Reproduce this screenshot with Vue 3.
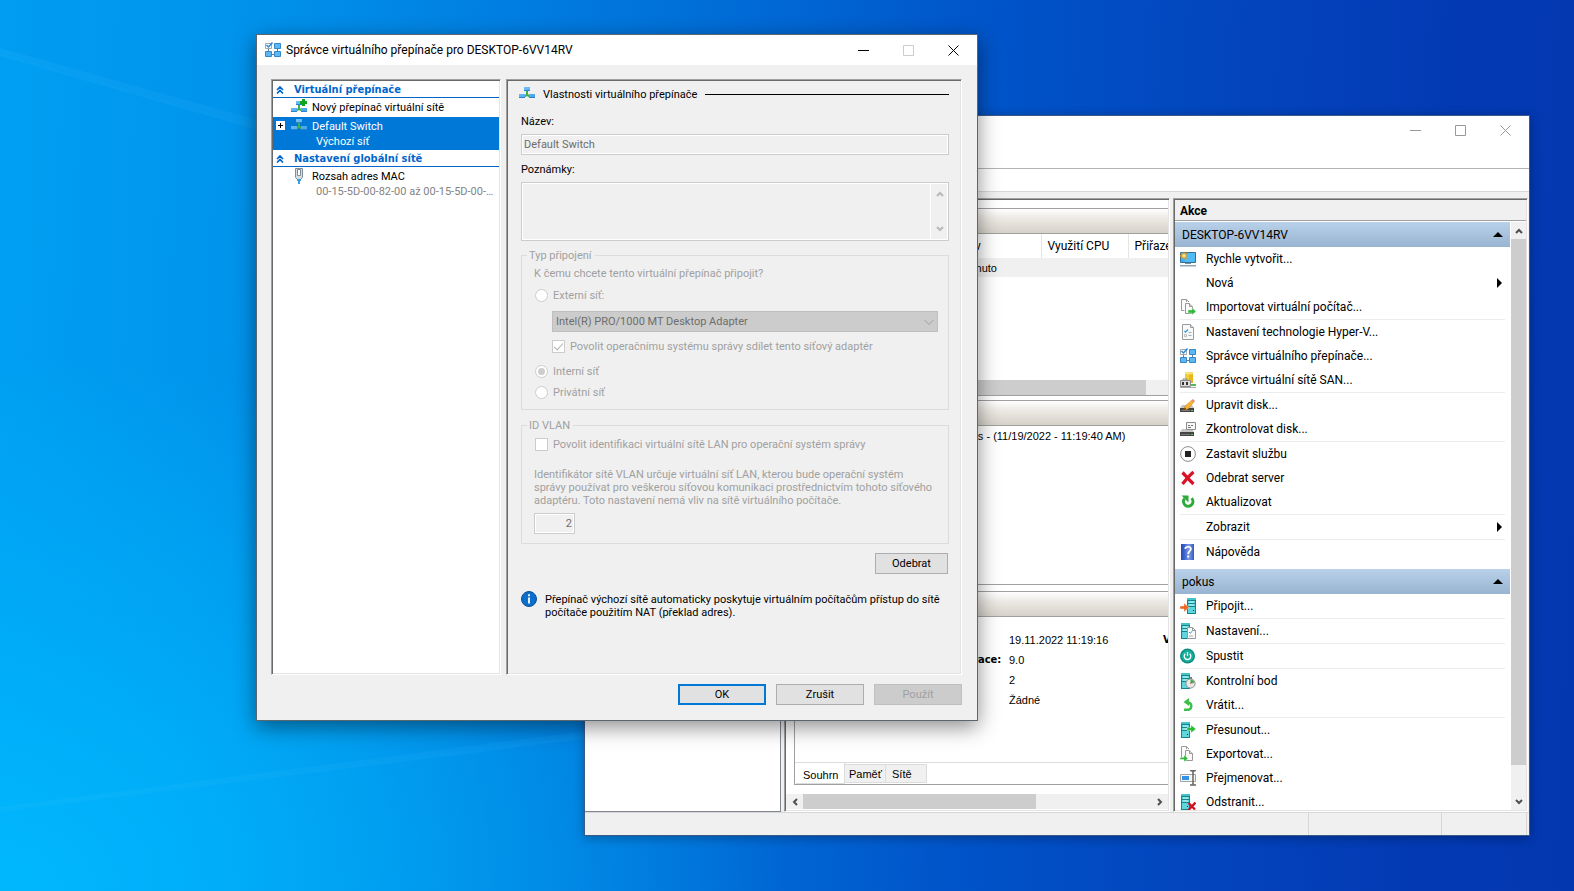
<script setup>
const serverActions = [
  { label: 'Rychle vytvořit...', icon: 'quick' },
  { label: 'Nová', submenu: true },
  { label: 'Importovat virtuální počítač...', icon: 'import' },
  { label: 'Nastavení technologie Hyper-V...', icon: 'settings', sep: true },
  { label: 'Správce virtuálního přepínače...', icon: 'manager' },
  { label: 'Správce virtuální sítě SAN...', icon: 'san' },
  { label: 'Upravit disk...', icon: 'disk-edit', sep: true },
  { label: 'Zkontrolovat disk...', icon: 'disk-check' },
  { label: 'Zastavit službu', icon: 'stop', sep: true },
  { label: 'Odebrat server', icon: 'remove' },
  { label: 'Aktualizovat', icon: 'refresh' },
  { label: 'Zobrazit', submenu: true, sep: true },
  { label: 'Nápověda', icon: 'help', sep: true }
]
const vmActions = [
  { label: 'Připojit...', icon: 'connect' },
  { label: 'Nastavení...', icon: 'vm-settings', sep: true },
  { label: 'Spustit', icon: 'power', sep: true },
  { label: 'Kontrolní bod', icon: 'checkpoint', sep: true },
  { label: 'Vrátit...', icon: 'revert' },
  { label: 'Přesunout...', icon: 'move', sep: true },
  { label: 'Exportovat...', icon: 'export' },
  { label: 'Přejmenovat...', icon: 'rename' },
  { label: 'Odstranit...', icon: 'delete' }
]
const groups = [
  { title: 'DESKTOP-6VV14RV', items: serverActions },
  { title: 'pokus', items: vmActions }
]
</script>

<template>
  <main class="desktop">
    <svg class="sprite" width="0" height="0" aria-hidden="true">
      <defs>
        <linearGradient id="blueFill" x1="0" y1="0" x2="1" y2="1">
          <stop offset="0" stop-color="#7cc4f5" /><stop offset="1" stop-color="#3ea3ea" />
        </linearGradient>
        <linearGradient id="helpFill" x1="0" y1="0" x2="1" y2="0">
          <stop offset="0" stop-color="#2a4bb0" /><stop offset=".25" stop-color="#3b62cc" /><stop offset=".6" stop-color="#7e9ce8" /><stop offset="1" stop-color="#3558c0" />
        </linearGradient>
        <symbol id="i-switch" viewBox="0 0 16 16">
          <path d="M7 5h2v3l2 2v1H9.500L8 10l-1.500 1H5v-1l2-2z" fill="#3eb049" />
          <path d="M5 1h6v4H5zM0 8h6v4H0zM10 8h6v4h-6z" fill="url(#blueFill)" />
          <path d="M5 4h6v1H5zM0 11h6v1H0zM10 11h6v1h-6z" fill="#2b83cd" />
        </symbol>
        <symbol id="i-switch-new" viewBox="0 0 16 16">
          <use href="#i-switch" x="0" y="1" width="16" height="16" />
          <path d="M11 0h3v2h2v3h-2v2h-3V5H9V2h2z" fill="#0ea51c" />
        </symbol>
        <symbol id="i-manager" viewBox="0 0 16 16">
          <path d="M12.500 6v5M6 12.500h4M3.500 6v4" stroke="#6d7c88" fill="none" />
          <path d="M.5 1.500h6v5h-6z" fill="#fff" stroke="#a0a8ae" />
          <path d="M1.500 3l2 2L7.500.5" stroke="#2889dc" stroke-width="1.500" fill="none" />
          <path d="M9.500 1.500h6v5h-6zM.5 9.500h6v5h-6zM9.500 9.500h6v5h-6z" fill="#5cb8f4" stroke="#3488c8" />
        </symbol>
        <symbol id="i-nic" viewBox="0 0 16 16">
          <path d="M4.500.5h7v9l-2 2h-3l-2-2z" fill="#d5dce2" stroke="#7f8d99" />
          <path d="M6.500 1.500h3v6h-3z" fill="#fff" stroke="#7f8d99" />
          <path d="M6 11h4v2H6zM7 13h2v3H7z" fill="#38a0dc" />
        </symbol>
        <symbol id="i-quick" viewBox="0 0 16 16">
          <path d="M.5 1.500h15v10H.5z" fill="#37aef5" stroke="#35708f" />
          <path d="M8 2h7v9H4z" fill="#6cc7fb" opacity=".5" />
          <path d="M4 .8v8M0 4.800h8M1.200 2l5.600 5.600M6.800 2L1.200 7.600" stroke="#f0a41a" stroke-width="1.200" />
          <circle cx="4" cy="4.800" r="1.700" fill="#ffe08a" />
          <path d="M5 12h6v1H5z" fill="#79909c" /><path d="M0 14h16v1.500H0z" fill="#90a4b1" />
        </symbol>
        <symbol id="i-pages" viewBox="0 0 16 16">
          <path d="M1.500 11.500v-11h5l2.500 2.500M6.500.5V3" fill="#fafafa" stroke="#989898" />
          <path d="M1.500 11.500h3" stroke="#989898" />
          <path d="M5.500 4.500h4l3 3v7h-7z" fill="#fafafa" stroke="#989898" />
          <path d="M9.500 4.500v3h3" fill="#ddd" stroke="#989898" />
        </symbol>
        <symbol id="i-import" viewBox="0 0 16 16">
          <use href="#i-pages" width="16" height="16" />
          <path d="M8 11h4V8.500l4 4-4 3.500v-2H8z" fill="#2dba36" stroke="#fff" stroke-width=".4" />
        </symbol>
        <symbol id="i-export" viewBox="0 0 16 16">
          <use href="#i-pages" width="16" height="16" />
          <path d="M0 11.500h4V9l4 3.500L4 16v-2.500H0z" fill="#2dba36" stroke="#fff" stroke-width=".4" />
        </symbol>
        <symbol id="i-settings" viewBox="0 0 16 16">
          <path d="M2.500.5h8l3 3v12h-11z" fill="#f7f9fa" stroke="#969b9e" />
          <path d="M10.500.5v3h3" fill="#ddd" stroke="#969b9e" />
          <path d="M4.500 7l1 1.200L8 5.500" fill="none" stroke="#3094df" stroke-width="1.200" />
          <path d="M8.500 8.500h3M8.500 11.500h3" stroke="#aaa" /><path d="M4.500 10.500h2v2h-2z" fill="#fff" stroke="#bbb" />
        </symbol>
        <symbol id="i-san" viewBox="0 0 16 16">
          <path d="M5 1c0-1.200 8-1.200 8 0v10H5z" fill="#f2cc36" /><path d="M9 .2c2 0 4 .2 4 .8v10H9z" fill="#e5b91e" /><ellipse cx="9" cy="1.300" rx="4" ry="1.100" fill="#fbe684" />
          <path d="M3 8.500V7h4v1.500" fill="none" stroke="#888" /><path d="M.5 8.500h10v6H.5z" fill="#ddd" stroke="#8a8a8a" />
          <path d="M2 10h2v3H2zM6 10h2v3H6z" fill="#333" /><path d="M11 12h5v2h-5z" fill="#51b75b" /><path d="M0 15h16v1H0z" fill="#a4aaad" />
        </symbol>
        <symbol id="i-disk" viewBox="0 0 16 16">
          <path d="M2 8h10l2 3H0z" fill="#c6c6c6" /><path d="M0 11h14v4H0z" fill="#444" /><path d="M1 13h9v1H1z" fill="#777" /><path d="M11 13h2v1h-2z" fill="#47d24d" />
        </symbol>
        <symbol id="i-disk-edit" viewBox="0 0 16 16">
          <use href="#i-disk" width="16" height="16" />
          <path d="M4 13l1-4 7-6 2 2-6 7z" fill="#f6b335" stroke="#c98417" stroke-width=".5" /><path d="M11.500 3.300l1.500-1.300 2 2-1.300 1.500z" fill="#e58b7d" /><path d="M4 13l.7-2.600 1.600 1.600z" fill="#463012" />
        </symbol>
        <symbol id="i-disk-check" viewBox="0 0 16 16">
          <use href="#i-disk" width="16" height="16" />
          <path d="M6.500 1.500h9v7h-9z" fill="#f8f8f8" stroke="#8b8b8b" /><path d="M8 4h2v1H8zM11 4h2v1h-2zM8 6h3v1H8z" fill="#777" />
        </symbol>
        <symbol id="i-stop" viewBox="0 0 16 16">
          <circle cx="8" cy="8" r="7.400" fill="#fff" stroke="#8c8c8c" /><path d="M5 5h6v6H5z" fill="#222" />
        </symbol>
        <symbol id="i-remove" viewBox="0 0 16 16">
          <path d="M2.500 2.500c3 3 6 7 11 11.500M13.500 2C10 5 6 9.500 2.500 14" stroke="#db1226" stroke-width="3.200" fill="none" />
        </symbol>
        <symbol id="i-refresh" viewBox="0 0 16 16">
          <path d="M11.600 4.200a4.700 4.700 0 1 1-7 .3" fill="none" stroke="#2dab3a" stroke-width="3" />
          <path d="M1.500 1.500h7v7z" fill="#2dab3a" />
        </symbol>
        <symbol id="i-help" viewBox="0 0 16 16">
          <path d="M1 0h13v16H1z" fill="url(#helpFill)" />
          <path d="M5.300 5c0-3 5.600-3 5.600.1 0 2.300-2.700 2-2.700 4.900" fill="none" stroke="#fff" stroke-width="1.700" /><path d="M7.200 11.500h2v2h-2z" fill="#fff" />
        </symbol>
        <symbol id="i-server" viewBox="0 0 9 16">
          <path d="M0 0h9v16H0z" fill="#15848c" /><path d="M0 0h9v2H0z" fill="#43c3c8" /><path d="M1 3h7v12H1z" fill="#5fd5dc" />
          <path d="M1 5h7v1H1zM1 8h7v1H1z" fill="#15848c" /><path d="M2 3.500h5v1H2zM2 6.500h5v1H2z" fill="#c7f6f7" /><path d="M6 12h1v1H6z" fill="#126" />
        </symbol>
        <symbol id="i-connect" viewBox="0 0 16 16">
          <use href="#i-server" x="7" width="9" height="16" />
          <path d="M0 8h4V5l5 4.500L4 14v-3H0z" fill="#f0641e" stroke="#fff" stroke-width=".4" />
        </symbol>
        <symbol id="i-vm-settings" viewBox="0 0 16 16">
          <use href="#i-server" x="1" width="9" height="16" />
          <path d="M7.500 4.500h5l3 3v8h-8z" fill="#f9f9f9" stroke="#999" /><path d="M12.500 4.500v3h3" fill="none" stroke="#999" /><path d="M9 9l1.200 1.200L12.500 8" fill="none" stroke="#3094df" /><path d="M9 13h4" stroke="#aaa" />
        </symbol>
        <symbol id="i-power" viewBox="0 0 16 16">
          <circle cx="7.500" cy="8" r="7.500" fill="#0c8f80" /><circle cx="7.500" cy="8" r="6" fill="#18ae9b" />
          <path d="M5.300 5.800a3.300 3.300 0 1 0 4.400 0M7.500 4v4" fill="none" stroke="#fff" stroke-width="1.300" />
        </symbol>
        <symbol id="i-checkpoint" viewBox="0 0 16 16">
          <use href="#i-server" x="1" width="9" height="16" />
          <path d="M9 4h3v2H9z" fill="#777" /><circle cx="10.500" cy="10.500" r="4.600" fill="#e8e8e8" stroke="#8d8d8d" /><path d="M10.500 6.500a4 4 0 0 1 3.800 3.500l-3.800.5z" fill="#42b64e" /><path d="M10.500 10.500l1.700-2" stroke="#c33" />
        </symbol>
        <symbol id="i-revert" viewBox="0 0 16 16">
          <path d="M4 12.800h4.500a3.900 3.900 0 0 0 0-7.500H7" fill="none" stroke="#3fbf4a" stroke-width="2.400" /><path d="M3.500 5L9 1v8z" fill="#3fbf4a" />
        </symbol>
        <symbol id="i-move" viewBox="0 0 16 16">
          <use href="#i-server" x="1" width="9" height="16" />
          <path d="M7 5.500h4V3l5 4-5 4V8.500H7z" fill="#2cbb35" stroke="#fff" stroke-width=".4" />
        </symbol>
        <symbol id="i-rename" viewBox="0 0 16 16">
          <path d="M.5 4.500h15v7H.5z" fill="#f6f6f6" stroke="#a3a3a3" /><path d="M2 6h7v4H2z" fill="#3492e4" />
          <path d="M10 .5h6M13 1v14M10 15h6" stroke="#666" stroke-width="1.500" /><path d="M11 1h4l-2 2zM11 15h4l-2-2z" fill="#777" />
        </symbol>
        <symbol id="i-delete" viewBox="0 0 16 16">
          <use href="#i-server" x="1" width="9" height="16" />
          <path d="M8.500 9l6.500 6.500M15.500 8.500L8.500 16" stroke="#cf1020" stroke-width="2.300" />
        </symbol>
        <symbol id="i-info" viewBox="0 0 16 16">
          <circle cx="8" cy="8" r="7.500" fill="#0b6fcb" stroke="#0a5099" /><path d="M7.100 6.500h1.800v6H7.100zM7.100 3.300h1.800v1.900H7.100z" fill="#fff" />
        </symbol>
        <symbol id="i-up" viewBox="0 0 8 8"><path d="M1 6l3-3 3 3" fill="none" stroke="currentColor" stroke-width="2" /></symbol>
        <symbol id="i-down" viewBox="0 0 8 8"><path d="M1 2l3 3 3-3" fill="none" stroke="currentColor" stroke-width="2" /></symbol>
        <symbol id="i-left" viewBox="0 0 8 8"><path d="M6 1L3 4l3 3" fill="none" stroke="currentColor" stroke-width="2" /></symbol>
        <symbol id="i-right" viewBox="0 0 8 8"><path d="M2 1l3 3-3 3" fill="none" stroke="currentColor" stroke-width="2" /></symbol>
        <symbol id="i-chevrons" viewBox="0 0 8 8"><path d="M1 4l3-3 3 3M1 7.500l3-3 3 3" fill="none" stroke="currentColor" stroke-width="1.700" /></symbol>
        <symbol id="i-min" viewBox="0 0 11 11"><path d="M0 5.500h11" stroke="currentColor" /></symbol>
        <symbol id="i-max" viewBox="0 0 11 11"><path d="M.5.500h10v10H.5z" fill="none" stroke="currentColor" /></symbol>
        <symbol id="i-close" viewBox="0 0 11 11"><path d="M.5.500l10 10M10.500.500l-10 10" stroke="currentColor" /></symbol>
      </defs>
    </svg>
    <svg class="wallpaper" viewBox="0 0 1574 891" preserveAspectRatio="none" aria-hidden="true">
      <defs>
        <linearGradient id="beam" x1="0" y1="0" x2="1" y2="0">
          <stop offset="0" stop-color="#4cc4ff" stop-opacity=".1" /><stop offset="1" stop-color="#4cc4ff" stop-opacity=".08" />
        </linearGradient>
        <linearGradient id="glow" x1="0" y1="0" x2="1" y2="0">
          <stop offset="0" stop-color="#00b0ff" stop-opacity=".12" /><stop offset="1" stop-color="#00b0ff" stop-opacity="0" />
        </linearGradient>
      </defs>
      <path d="M0 48L300 132V142L0 56z" fill="url(#beam)" />
      <path d="M0 54L300 140V600H0z" fill="url(#glow)" />
      <path d="M0 807L640 724V732L0 812z" fill="url(#beam)" />
      <path d="M0 810L1000 682V891H0z" fill="url(#glow)" />
    </svg>

    <section class="window manager-window" aria-label="Správce technologie Hyper-V">
      <header class="titlebar inactive">
        <span class="grow"></span>
        <button type="button" aria-label="Minimalizovat"><svg width="11" height="11"><use href="#i-min" /></svg></button>
        <button type="button" aria-label="Maximalizovat"><svg width="11" height="11"><use href="#i-max" /></svg></button>
        <button type="button" aria-label="Zavřít"><svg width="11" height="11"><use href="#i-close" /></svg></button>
      </header>
      <div class="menubar"></div>
      <div class="toolbar"></div>
      <div class="body">
        <nav class="console-tree"></nav>
        <div class="center sunken">
          <div class="band first"></div>
          <div class="vm-list">
            <table>
              <colgroup><col class="c-name" /><col class="c-state" /><col class="c-cpu" /><col /></colgroup>
              <thead><tr><th></th><th>Stav</th><th>Využití CPU</th><th>Přiřazená paměť</th></tr></thead>
              <tbody><tr><td></td><td>Vypnuto</td><td></td><td></td></tr></tbody>
            </table>
            <span class="grow"></span>
            <div class="hbar inner"><span class="thumb"></span></div>
          </div>
          <div class="band"></div>
          <div class="snapshots"><p>pokus - (11/19/2022 - 11:19:40 AM)</p></div>
          <div class="band"></div>
          <div class="summary">
            <dl>
              <dt>Vytvořeno:</dt><dd>19.11.2022 11:19:16</dd><dd class="next">V clusteru:</dd>
              <dt>Verze konfigurace:</dt><dd>9.0</dd><dd></dd>
              <dt>Generace:</dt><dd>2</dd><dd></dd>
              <dt>Poznámky:</dt><dd>Žádné</dd><dd></dd>
            </dl>
            <div class="tabs">
              <button type="button" class="active">Souhrn</button><button type="button">Paměť</button><button type="button">Sítě</button>
            </div>
          </div>
          <div class="hbar outer">
            <button type="button" aria-label="Posunout vlevo"><svg width="8" height="8"><use href="#i-left" /></svg></button>
            <span class="track"><span class="thumb"></span></span>
            <button type="button" aria-label="Posunout vpravo"><svg width="8" height="8"><use href="#i-right" /></svg></button>
          </div>
        </div>
        <aside class="actions sunken">
          <h2>Akce</h2>
          <div class="actions-body">
            <div class="action-list">
              <section v-for="g in groups" :key="g.title">
                <button type="button" class="group-head"><span>{{ g.title }}</span><i class="tri-up"></i></button>
                <ul>
                  <li v-for="a in g.items" :key="a.label" :class="{ sep: a.sep }">
                    <button type="button">
                      <svg class="ico" width="16" height="16"><use v-if="a.icon" :href="'#i-' + a.icon" /></svg>
                      <span>{{ a.label }}</span>
                      <i v-if="a.submenu" class="tri-right"></i>
                    </button>
                  </li>
                </ul>
              </section>
            </div>
            <div class="vbar">
              <button type="button" aria-label="Nahoru"><svg width="8" height="8"><use href="#i-up" /></svg></button>
              <span class="vtrack"><span class="thumb"></span></span>
              <button type="button" aria-label="Dolů"><svg width="8" height="8"><use href="#i-down" /></svg></button>
            </div>
          </div>
        </aside>
      </div>
      <footer class="statusbar"><span></span><span></span><span></span></footer>
    </section>

    <section class="window dialog" role="dialog" aria-labelledby="dlg-title">
      <header class="titlebar">
        <svg class="app-ico" width="16" height="16"><use href="#i-manager" /></svg>
        <h1 id="dlg-title" class="grow">Správce virtuálního přepínače pro DESKTOP-6VV14RV</h1>
        <button type="button" aria-label="Minimalizovat"><svg width="11" height="11"><use href="#i-min" /></svg></button>
        <button type="button" disabled aria-label="Maximalizovat"><svg width="11" height="11"><use href="#i-max" /></svg></button>
        <button type="button" aria-label="Zavřít"><svg width="11" height="11"><use href="#i-close" /></svg></button>
      </header>
      <div class="panes">
        <nav class="tree sunken">
          <button type="button" class="tree-head"><svg width="8" height="8"><use href="#i-chevrons" /></svg>Virtuální přepínače</button>
          <button type="button" class="node"><svg class="ico" width="16" height="16"><use href="#i-switch-new" /></svg><span>Nový přepínač virtuální sítě</span></button>
          <button type="button" class="node selected"><i class="plus"></i><svg class="ico" width="16" height="16"><use href="#i-switch" /></svg><span>Default Switch<small>Výchozí síť</small></span></button>
          <button type="button" class="tree-head"><svg width="8" height="8"><use href="#i-chevrons" /></svg>Nastavení globální sítě</button>
          <button type="button" class="node"><svg class="ico" width="16" height="16"><use href="#i-nic" /></svg><span>Rozsah adres MAC<small>00-15-5D-00-82-00 až 00-15-5D-00-82-FF</small></span></button>
        </nav>
        <form class="props sunken" @submit.prevent>
          <h2><svg width="16" height="16"><use href="#i-switch" /></svg><span>Vlastnosti virtuálního přepínače</span><i></i></h2>
          <label for="sw-name">Název:</label>
          <input id="sw-name" type="text" value="Default Switch" disabled />
          <label for="sw-notes">Poznámky:</label>
          <div class="notes">
            <textarea id="sw-notes" disabled></textarea>
            <span class="notes-bar"><svg width="8" height="8"><use href="#i-up" /></svg><svg width="8" height="8"><use href="#i-down" /></svg></span>
          </div>
          <fieldset class="conn" disabled>
            <legend>Typ připojení</legend>
            <p>K čemu chcete tento virtuální přepínač připojit?</p>
            <label class="opt"><input type="radio" name="conn" />Externí síť:</label>
            <div class="combo">
              <select aria-label="Síťový adaptér"><option>Intel(R) PRO/1000 MT Desktop Adapter</option></select>
              <svg width="10" height="8" viewBox="0 0 10 8"><path d="M.5 2L5 6.500 9.500 2" fill="none" stroke="#a0a0a0" /></svg>
            </div>
            <label class="opt share"><input type="checkbox" checked />Povolit operačnímu systému správy sdílet tento síťový adaptér</label>
            <label class="opt"><input type="radio" name="conn" checked />Interní síť</label>
            <label class="opt"><input type="radio" name="conn" />Privátní síť</label>
          </fieldset>
          <fieldset class="vlan" disabled>
            <legend>ID VLAN</legend>
            <label class="opt"><input type="checkbox" />Povolit identifikaci virtuální sítě LAN pro operační systém správy</label>
            <p>Identifikátor sítě VLAN určuje virtuální síť LAN, kterou bude operační systém<br />správy používat pro veškerou síťovou komunikaci prostřednictvím tohoto síťového<br />adaptéru. Toto nastavení nemá vliv na sítě virtuálního počítače.</p>
            <input type="text" class="vid" value="2" aria-label="Identifikátor VLAN" />
          </fieldset>
          <button type="button" class="btn remove">Odebrat</button>
          <div class="info">
            <svg width="16" height="16"><use href="#i-info" /></svg>
            <p>Přepínač výchozí sítě automaticky poskytuje virtuálním počítačům přístup do sítě<br />počítače použitím NAT (překlad adres).</p>
          </div>
        </form>
      </div>
      <footer class="buttons">
        <button type="button" class="btn default">OK</button>
        <button type="button" class="btn">Zrušit</button>
        <button type="button" class="btn" disabled>Použít</button>
      </footer>
    </section>
  </main>
</template>

<style>
html, body { margin: 0; height: 100%; overflow: hidden; }
</style>

<style scoped>
* { box-sizing: border-box; }
button { appearance: none; border: 0; background: none; padding: 0; margin: 0; font: inherit; color: inherit; text-align: left; }
ul, dl, dd, p, h1, h2 { margin: 0; padding: 0; list-style: none; font: inherit; }
svg { display: block; flex: none; }
.grow { flex: 1; }

.desktop {
  position: relative; height: 100vh; min-height: 600px; overflow: hidden;
  font: 12px/16px Roboto, "Open Sans", sans-serif; color: #000;
  background:
    radial-gradient(ellipse 50% 60% at 0 100%, rgba(0, 190, 255, .85), rgba(0, 180, 255, 0)),
    linear-gradient(93deg, #009df2 0%, #0094ec 14%, #0080e2 30%, #0068d4 48%, #0053c8 62%, #0345bd 76%, #033ab4 90%, #0337b0 100%);
}
.sprite { position: absolute; }
.wallpaper { position: absolute; inset: 0; width: 100%; height: 100%; }

.window { position: absolute; display: flex; flex-direction: column; background: #f0f0f0; border: 1px solid #5a6670; }
.manager-window { inset: 115px 44px 55px 584px; border-color: #3c5a86; box-shadow: 0 2px 10px rgba(0, 0, 0, .3); }
.dialog { left: 256px; top: 34px; width: 722px; box-shadow: 0 6px 20px rgba(0, 0, 0, .45); font: 11px/13px Roboto, "DejaVu Sans Condensed", sans-serif; }

.titlebar { display: flex; align-items: center; height: 30px; padding-right: 1px; background: #fff; font: 12px/16px Roboto, "Open Sans", sans-serif; }
.titlebar .app-ico { margin: 0 5px 0 8px; }
.titlebar button { width: 45px; height: 28px; display: grid; place-items: center; }
.titlebar button:disabled { color: #ccc; }
.titlebar.inactive { color: #999; height: 29px; }

.menubar { height: 24px; background: #fff; border-bottom: 1px solid #b4b4b4; }
.toolbar { height: 23px; background: #fff; border-bottom: 1px solid #d8d8d8; }
.sunken { border: 1px solid; border-color: #a0a0a0 #fff #fff #a0a0a0; box-shadow: inset 1px 1px #696969, inset -1px -1px #e3e3e3; padding: 1px; }
.body { flex: 1; min-height: 0; display: flex; padding: 6px 1px 0 0; }
.console-tree { width: 196px; background: #fff; border: 1px solid #828790; border-left: 0; margin-right: 3px; }
.center { flex: 1; min-width: 0; margin-right: 3px; background: #fff; display: flex; flex-direction: column; overflow: hidden; }
.band { flex: none; height: 26px; border: solid #a0a0a0; border-width: 1px 0; margin: 0 0 0 8px; background: linear-gradient(#fff, #ece9e4 40%, #d6d2c9); }
.band.first { margin-top: 8px; }
.vm-list { height: 162px; margin: 0 0 4px 8px; border-bottom: 1px solid #a0a0a0; display: flex; flex-direction: column; overflow: hidden; }
table { width: 400px; table-layout: fixed; border-collapse: collapse; }
.c-name { width: 157px; }
.c-state { width: 90px; }
.c-cpu { width: 87px; }
th { font-weight: 400; text-align: left; height: 24px; padding: 0 6px; border-right: 1px solid #e5e5e5; white-space: nowrap; }
td { height: 19px; padding: 0 6px; background: #f0f0f0; font: 11px/16px "Liberation Sans", sans-serif; }
.hbar { display: flex; background: #f0f0f0; height: 15px; flex: none; }
.thumb { display: block; background: #cdcdcd; }
.inner .thumb { width: 94%; }
.snapshots { height: 159px; margin: 0 0 6px 8px; border-bottom: 1px solid #a0a0a0; padding: 2px 0 0 160px; font: 11px/16px "Liberation Sans", sans-serif; white-space: nowrap; }
.summary { flex: 1; min-height: 0; margin: 0 0 9px 8px; border: solid #a0a0a0; border-width: 0 0 1px 1px; display: flex; flex-direction: column; justify-content: space-between; }
dl { display: grid; grid-template-columns: 112px 154px max-content; padding: 13px 0 0 102px; overflow: hidden; }
dl dt, dl .next { font: bold 11px/20px "DejaVu Sans Condensed", sans-serif; white-space: nowrap; }
dl dd { font: 11px/20px "Liberation Sans", sans-serif; }
.tabs { display: flex; border-top: 1px solid #dcdcdc; height: 22px; padding-left: 1px; font: 11px/16px "Liberation Sans", sans-serif; }
.tabs button { height: 19px; width: 41px; padding: 0 4px; margin-top: 1px; background: #f0f0f0; border: 1px solid #dcdcdc; border-left: 0; }
.tabs button:last-child { padding-left: 6px; }
.tabs .active { width: 49px; padding: 4px 0 0 7px; background: #fff; border-top: 0; margin-top: 0; height: 21px; }
.outer { margin-bottom: 1px; }
.outer button { width: 17px; display: grid; place-items: center; color: #505050; }
.outer .track { flex: 1; display: flex; }
.outer .thumb { width: 67%; }

.actions { width: 355px; background: #fff; display: flex; flex-direction: column; }
.actions h2 { height: 21px; padding: 3px 5px 1px; background: #f0f0f0; border-bottom: 1px solid #a0a0a0; margin-bottom: 1px; font-weight: 700; }
.actions-body { flex: 1; min-height: 0; display: flex; }
.action-list { flex: 1; min-width: 0; overflow: hidden; }
.action-list section { padding-bottom: 5px; }
.group-head { display: flex; align-items: center; justify-content: space-between; width: 100%; height: 25px; padding: 0 7px; background: linear-gradient(#b9d1ea, #99b4d1); }
.tri-up { border: 5px solid transparent; border-bottom-color: #000; border-top: 0; }
.tri-right { border: 5px solid transparent; border-left-color: #000; border-right: 0; margin-left: auto; margin-right: 3px; }
.action-list li { margin: 0 5px; }
.action-list li.sep { border-top: 1px solid #ececec; }
.action-list li button { display: flex; align-items: center; width: 100%; height: 24px; }
.action-list .ico { margin-right: 10px; }
.vbar { width: 15px; margin-left: 1px; display: flex; flex-direction: column; background: #f0f0f0; }
.vbar button { height: 17px; display: grid; place-items: center; color: #505050; }
.vtrack { flex: 1; }
.vtrack .thumb { height: 95%; width: 15px; }
.statusbar { display: flex; height: 23px; border-top: 1px solid #d7d7d7; padding-right: 2px; }
.statusbar span { border-right: 1px solid #d7d7d7; width: 85px; }
.statusbar span:first-child { flex: 1; }
.statusbar span:nth-child(2) { width: 133px; }

.panes { display: grid; grid-template-columns: 230px minmax(0, 1fr); gap: 5px; padding: 14px 15px 0 14px; min-height: 610px; }
.tree { background: #fff; min-width: 0; }
.tree button { display: flex; width: 100%; }
.tree .tree-head { height: 17px; align-items: center; gap: 10px; padding: 1px 0 0 3px; color: #0066cc; font: bold 11px/13px "DejaVu Sans Condensed", sans-serif; border-bottom: 1px solid #0066cc; }
.node { position: relative; padding: 2px 4px 2px 18px; gap: 5px; min-height: 19px; }
.node .ico { margin-top: -1px; }
.node > span { min-width: 0; flex: 1; padding: 1px 0 0; }
.node small { display: block; font-size: 11px; line-height: 15px; padding: 1px 0 0 4px; color: #838383; overflow: hidden; text-overflow: ellipsis; white-space: nowrap; }
.node.selected { background: #0078d7; color: #fff; height: 33px; }
.node.selected small { color: #fff; }
.plus { position: absolute; left: 3px; top: 4px; width: 9px; height: 9px; background: linear-gradient(#000, #000) center / 5px 1px no-repeat, linear-gradient(#000, #000) center / 1px 5px no-repeat, #fff; }

.props { display: flex; flex-direction: column; padding: 6px 12px 0 14px; }
.props h2 { display: flex; align-items: center; height: 16px; margin: 0 0 13px -2px; }
.props h2 span { margin: 0 8px; }
.props h2 i { flex: 1; height: 1px; background: #000; }
.props > label { height: 19px; }
.props > input, .vid { height: 21px; border: 1px solid #ccc; outline: 1px solid #fff; outline-offset: -2px; background: #f0f0f0; font: inherit; color: #6d6d6d; padding: 0 2px; margin-bottom: 8px; border-radius: 0; }
.notes { display: flex; height: 59px; border: 1px solid #ccc; outline: 1px solid #fff; outline-offset: -2px; }
.notes textarea { flex: 1; min-width: 0; border: 0; background: none; resize: none; }
.notes-bar { width: 18px; border-left: 1px solid #fff; display: flex; flex-direction: column; justify-content: space-between; align-items: center; padding: 7px 0; color: #b8b8b8; }
fieldset { margin: 0; min-width: 0; border: 1px solid #dcdcdc; padding: 0 10px 0 12px; color: #a0a0a0; display: flex; flex-direction: column; }
legend { margin-left: -7px; padding: 0 3px 0 2px; }
.conn { height: 161px; margin-top: 8px; }
.conn p { padding: 5px 0 9px; }
.opt { display: flex; align-items: center; gap: 5px; height: 21px; }
.opt input { appearance: none; width: 13px; height: 13px; margin: 0 0 0 1px; border: 1px solid #ccc; background: #fff; display: grid; place-items: center; flex: none; }
.opt input[type=radio] { border-radius: 50%; }
.opt input[type=radio]:checked::before { content: ""; width: 7px; height: 7px; border-radius: 50%; background: #ccc; }
.opt input[type=checkbox]:checked::before { content: ""; width: 4px; height: 8px; border: solid #b0b0b0; border-width: 0 1px 1px 0; transform: rotate(42deg); margin-bottom: 2px; }
.conn p + .opt { height: 13px; margin-bottom: 9px; }
.combo { display: grid; margin-left: 18px; width: 386px; max-width: 100%; }
.combo > * { grid-area: 1 / 1; }
.combo svg { justify-self: end; align-self: center; margin-right: 4px; }
.combo select { appearance: none; height: 21px; border: 1px solid #bfbfbf; border-radius: 0; background: #ccc; color: #6d6d6d; font: inherit; padding: 0 3px; opacity: 1; }
.share { margin: 4px 0 4px 17px; }
.vlan { height: 125px; margin-top: 9px; }
.vlan .opt { margin-top: 2px; }
.vlan p { margin: 13px 0 6px; white-space: nowrap; }
.vid { width: 41px; text-align: right; margin: 0; flex: none; }
.btn { width: 88px; height: 21px; background: #e1e1e1; border: 1px solid #adadad; text-align: center; }
.btn.default { border: 2px solid #0078d7; }
.btn:disabled { background: #ccc; border-color: #bfbfbf; color: #a0a0a0; }
.remove { width: 73px; align-self: flex-end; margin: 9px 1px 17px 0; flex: none; }
.info { display: flex; gap: 8px; }
.info p { padding-top: 2px; white-space: nowrap; }
.buttons { display: flex; justify-content: flex-end; gap: 10px; padding: 9px 15px 15px 0; }
</style>
